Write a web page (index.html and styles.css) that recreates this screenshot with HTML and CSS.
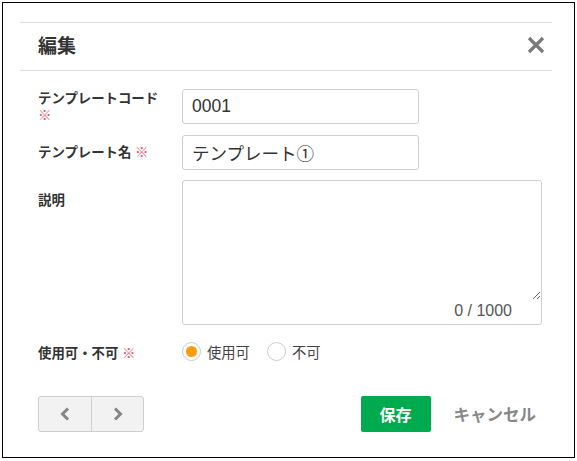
FILE: index.html
```html
<!DOCTYPE html>
<html lang="ja">
<head>
<meta charset="utf-8">
<title>編集</title>
<link rel="stylesheet" href="styles.css">
</head>
<body>
<div class="frame">
  <div class="dialog">
    <div class="header">
      <h1 class="title">編集</h1>
      <button class="close" aria-label="閉じる">
        <svg width="18" height="18" viewBox="0 0 18 18"><path d="M2 2 L16 16 M16 2 L2 16" stroke="#7a7a7a" stroke-width="3.2" fill="none"/></svg>
      </button>
    </div>
    <div class="form">
      <div class="row">
        <div class="label"><div class="label-text">テンプレートコード<br><span class="req">※</span></div></div>
        <input class="input" type="text" value="0001">
      </div>
      <div class="row">
        <div class="label"><div class="label-text">テンプレート名 <span class="req">※</span></div></div>
        <input class="input" type="text" value="テンプレート①">
      </div>
      <div class="row">
        <div class="label label-top"><div class="label-text">説明</div></div>
        <div class="area">
          <textarea class="textarea"></textarea>
          <div class="counter">0 / 1000</div>
        </div>
      </div>
      <div class="row">
        <div class="label"><div class="label-text">使用可・不可 <span class="req">※</span></div></div>
        <div class="radios">
          <label class="radio"><span class="circle checked"></span>使用可</label>
          <label class="radio"><span class="circle"></span>不可</label>
        </div>
      </div>
    </div>
    <div class="footer">
      <div class="nav">
        <button class="navbtn" aria-label="前へ">
          <svg width="12" height="14" viewBox="0 0 12 14"><path d="M9 1.5 L3.5 7 L9 12.5" stroke="#858585" stroke-width="3" fill="none"/></svg>
        </button>
        <button class="navbtn" aria-label="次へ">
          <svg width="12" height="14" viewBox="0 0 12 14"><path d="M3 1.5 L8.5 7 L3 12.5" stroke="#858585" stroke-width="3" fill="none"/></svg>
        </button>
      </div>
      <div class="actions">
        <button class="save">保存</button>
        <button class="cancel">キャンセル</button>
      </div>
    </div>
  </div>
</div>
</body>
</html>
```
FILE: styles.css
```css
* { box-sizing: border-box; }
html, body { margin: 0; padding: 0; background: #fff; }
body {
  font-family: "Liberation Sans", "Noto Sans CJK JP", sans-serif;
  color: #333;
}
.frame {
  margin: 2px;
  height: 456px;
  border: 1px solid #000;
}
.dialog {
  padding: 19px 22px 0 17px;
}
.header {
  display: flex;
  align-items: center;
  justify-content: space-between;
  height: 49px;
  border-top: 1px solid #dcdcdc;
  border-bottom: 1px solid #dcdcdc;
  padding: 0 7px 0 18px;
}
.title {
  margin: 0;
  font-size: 19px;
  font-weight: 700;
  color: #333;
  line-height: 24px;
}
.close {
  border: 0;
  background: none;
  padding: 0;
  width: 18px;
  height: 18px;
  display: flex;
  margin-top: -3px;
}
.form {
  padding: 18px 10px 0 18px;
  display: flex;
  flex-direction: column;
  gap: 11px;
}
.row {
  display: grid;
  grid-template-columns: 144px 1fr;
  align-items: start;
}
.label {
  height: 35px;
  display: flex;
  align-items: center;
}
.label-top { height: 38px; }
.label-text {
  font-size: 13.4px;
  line-height: 17px;
  font-weight: 700;
  color: #333;
}
.req {
  color: #e8506e;
  font-weight: 400;
}
.input {
  width: 237px;
  height: 35px;
  border: 1px solid #cfcfcf;
  border-radius: 3px;
  padding: 0 9px;
  font-family: "Liberation Sans", "Noto Sans CJK JP", sans-serif;
  font-size: 17.5px;
  color: #333;
  outline: none;
}
.area {
  width: 360px;
  height: 145px;
  margin-top: -1px;
  border: 1px solid #cfcfcf;
  border-radius: 3px;
  display: flex;
  flex-direction: column;
}
.textarea {
  flex: 1;
  border: 0;
  outline: none;
  margin: 0;
  padding: 6px 9px;
  font-family: "Liberation Sans", "Noto Sans CJK JP", sans-serif;
  font-size: 16px;
  resize: vertical;
  background: transparent;
}
.counter {
  text-align: right;
  padding: 0 29px 3px 0;
  font-size: 16px;
  line-height: 21px;
  color: #555;
}
.radios {
  height: 35px;
  display: flex;
  align-items: center;
  gap: 17px;
  margin-top: -2px;
}
.radio {
  display: flex;
  align-items: center;
  gap: 6px;
  font-size: 14.3px;
  color: #444;
}
.circle {
  width: 19px;
  height: 19px;
  border: 1px solid #cccccc;
  border-radius: 50%;
  background: #fff;
  display: flex;
  align-items: center;
  justify-content: center;
}
.circle.checked::after {
  content: "";
  width: 11px;
  height: 11px;
  border-radius: 50%;
  background: #ff9a00;
}
.footer {
  display: flex;
  justify-content: space-between;
  align-items: center;
  margin-top: 25px;
  padding: 0 16px 0 18px;
}
.nav {
  display: flex;
  border: 1px solid #cfcfcf;
  border-radius: 3px;
  background: #f2f2f2;
  height: 36px;
}
.navbtn {
  width: 52px;
  height: 34px;
  border: 0;
  background: none;
  padding: 0;
  display: flex;
  align-items: center;
  justify-content: center;
}
.navbtn + .navbtn { border-left: 1px solid #cfcfcf; }
.actions {
  display: flex;
  align-items: center;
  gap: 23px;
}
.save {
  width: 70px;
  height: 36px;
  border: 0;
  border-radius: 2px;
  background: #00aa4f;
  color: #fff;
  font-family: "Liberation Sans", "Noto Sans CJK JP", sans-serif;
  font-size: 16px;
  font-weight: 700;
}
.cancel {
  border: 0;
  background: none;
  padding: 0;
  color: #888;
  font-family: "Liberation Sans", "Noto Sans CJK JP", sans-serif;
  font-size: 16.5px;
  font-weight: 700;
}
```
